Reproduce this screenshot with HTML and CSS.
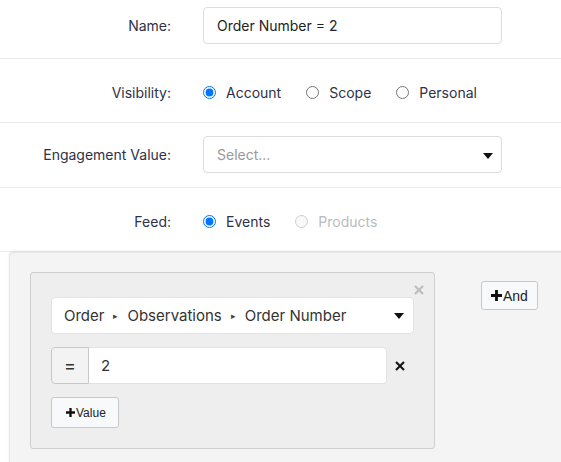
FILE: index.html
```html
<!DOCTYPE html>
<html>
<head>
    <title>Segment Editor</title>
    <meta name="viewport" content="width=device-width, initial-scale=1">
    <link rel="stylesheet" href="styles.css">
</head>
<body>
    <div class="segment-form">
        <div class="form-row">
            <label class="row-label">Name:</label>
            <input type="text" class="text-input" value="Order Number = 2">
        </div>

        <div class="form-row compact">
            <label class="row-label">Visibility:</label>
            <div class="radio-group">
                <label class="radio"><input type="radio" name="visibility" checked> Account</label>
                <label class="radio"><input type="radio" name="visibility"> Scope</label>
                <label class="radio"><input type="radio" name="visibility"> Personal</label>
            </div>
        </div>

        <div class="form-row">
            <label class="row-label">Engagement Value:</label>
            <div class="select-box">
                <span class="placeholder">Select...</span>
                <span class="caret"></span>
            </div>
        </div>

        <div class="form-row compact">
            <label class="row-label">Feed:</label>
            <div class="radio-group">
                <label class="radio"><input type="radio" name="feed" checked> Events</label>
                <label class="radio disabled"><input type="radio" name="feed" disabled> Products</label>
            </div>
        </div>

        <div class="rules-area">
            <div class="rule-box">
                <svg class="rule-close" width="10" height="10" viewBox="0 0 10 10">
                    <path d="M1 1L9 9M9 1L1 9" stroke="#bdbdbd" stroke-width="2.2"/>
                </svg>
                <div class="path-select">
                    <span>Order</span><span class="arrow">&#9656;</span>
                    <span>Observations</span><span class="arrow">&#9656;</span>
                    <span>Order Number</span>
                    <span class="caret"></span>
                </div>
                <div class="value-row">
                    <div class="input-group">
                        <span class="operator">=</span>
                        <input type="text" class="value-input" value="2">
                    </div>
                    <svg class="value-remove" width="10" height="10" viewBox="0 0 10 10">
                        <path d="M1 1L9 9M9 1L1 9" stroke="#111" stroke-width="2"/>
                    </svg>
                </div>
                <button class="btn-small btn-value">
                    <svg width="9" height="9" viewBox="0 0 10 10"><path d="M5 0V10M0 5H10" stroke="#111" stroke-width="2.6"/></svg>Value
                </button>
            </div>
            <button class="btn-small btn-and">
                <svg width="11" height="11" viewBox="0 0 10 10"><path d="M5 0V10M0 5H10" stroke="#111" stroke-width="2.6"/></svg>And
            </button>
        </div>
    </div>
</body>
</html>
```

FILE: styles.css
```css
* {
    margin: 0;
    padding: 0;
    box-sizing: border-box;
}

body {
    font-family: Inter, 'Noto Sans', sans-serif;
    font-size: 14px;
    color: #2e3148;
    background: white;
    overflow: hidden;
}

.segment-form {
    margin-top: -6px;
}

.form-row {
    display: flex;
    align-items: center;
    height: 65px;
    padding: 13px 0 14px;
    border-bottom: 1px solid #ececec;
}

.form-row.compact {
    height: 64px;
    padding: 4px 0 0;
}

.row-label {
    width: 171px;
    text-align: right;
    margin-right: 32px;
}

.text-input {
    width: 299px;
    height: 37px;
    padding: 0 13px;
    border: 1px solid #dcdcdc;
    border-radius: 4px;
    font-family: inherit;
    font-size: 14px;
    color: #222;
}

.radio-group {
    display: flex;
    gap: 25px;
}

.radio {
    display: flex;
    align-items: center;
    gap: 10px;
}

.radio input {
    width: 13px;
    height: 13px;
    margin: 0;
}

.radio.disabled {
    color: #bbb;
}

.select-box {
    position: relative;
    width: 299px;
    height: 37px;
    padding: 0 13px;
    display: flex;
    align-items: center;
    border: 1px solid #dcdcdc;
    border-radius: 4px;
}

.placeholder {
    color: #999;
}

.caret {
    position: absolute;
    right: 8px;
    top: 16px;
    border-left: 5px solid transparent;
    border-right: 5px solid transparent;
    border-top: 6px solid #111;
}

.rules-area {
    display: flex;
    align-items: flex-start;
    gap: 46px;
    margin: 0 -20px 0 9px;
    padding: 19px 21px 40px 20px;
    background: #f4f4f4;
    border: 1px solid #e6e6e6;
    border-radius: 4px;
    box-shadow: 0 -1px 3px rgba(0,0,0,0.08);
}

.rule-box {
    position: relative;
    width: 405px;
    padding: 24px 20px 20px;
    background: #eeeeee;
    border: 1px solid #cfcfcf;
    border-radius: 3px;
}

.rule-close {
    position: absolute;
    top: 12px;
    right: 10px;
}

.path-select {
    position: relative;
    display: flex;
    align-items: center;
    gap: 9px;
    height: 37px;
    padding: 0 12px;
    background: white;
    border: 1px solid #e2e2e2;
    border-radius: 4px;
    font-size: 15px;
    color: #333;
}

.path-select .arrow {
    font-size: 9px;
    color: #444;
}

.path-select .caret {
    top: 15px;
    right: 9px;
}

.value-row {
    display: flex;
    align-items: center;
    gap: 8px;
    margin-top: 13px;
}

.input-group {
    display: flex;
    width: 336px;
    height: 37px;
}

.operator {
    width: 38px;
    display: flex;
    align-items: center;
    justify-content: center;
    background: #f3f3f3;
    border: 1px solid #c8c8c8;
    border-radius: 4px 0 0 4px;
    font-size: 18px;
    color: #333;
}

.value-input {
    flex: 1;
    padding: 0 12px;
    border: 1px solid #e2e2e2;
    border-left: none;
    border-radius: 0 4px 4px 0;
    font-family: inherit;
    font-size: 15px;
    color: #333;
}

.btn-small {
    display: flex;
    align-items: center;
    gap: 1px;
    background: #f8f9fb;
    border: 1px solid #c8c8c8;
    border-radius: 3px;
    font-family: 'Liberation Sans', Arial, sans-serif;
    color: #222;
}

.btn-value {
    margin-top: 13px;
    height: 31px;
    padding: 0 12px 0 14px;
    font-size: 12px;
}

.btn-and {
    margin-top: 9px;
    height: 29px;
    padding: 0 9px;
    font-size: 14px;
}
```
